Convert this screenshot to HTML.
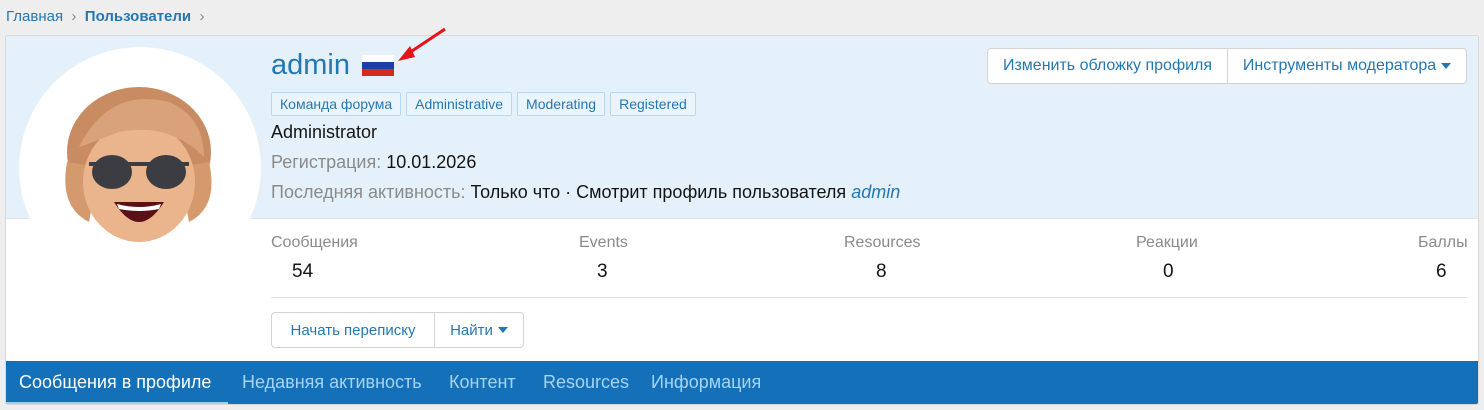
<!DOCTYPE html>
<html><head><meta charset="utf-8"><style>
*{box-sizing:border-box;margin:0;padding:0}
body{width:1484px;height:410px;background:#eeeeee;font-family:"Liberation Sans","DejaVu Sans",sans-serif;position:relative;overflow:hidden}
.a{position:absolute;white-space:nowrap}
.bc{top:8px;left:6px;font-size:15px;color:#2577b1}
.card{left:5px;top:35px;width:1474px;height:370px;background:#fff;border:1px solid #d8d8d8;border-radius:3px;overflow:hidden}
.cover{left:0;top:0;width:1472px;height:183px;background:#e5f1fa;border-bottom:1px solid #dfe6ec}
.tag{display:inline-block;border:1px solid #b8d8f0;background:#eaf4fc;color:#2577b1;font-size:14px;padding:3px 8px;border-radius:2px;margin-right:5px}
.btns{border:1px solid #d3d3d3;border-radius:4px;background:#fff;display:flex;font-size:16px;color:#2577b1}
.btns span{padding:0 13px;display:flex;align-items:center}
.btns span+span{border-left:1px solid #d3d3d3}
.lbl{font-size:16px;color:#8a8a8a}
.val{font-size:19px;color:#141414}
.nav{left:0;top:325px;width:1472px;height:44px;background:#1470b8;font-size:18px;color:#a9d3f3}
.nav span{position:absolute;top:11px}
.tri{display:inline-block;border:5px solid transparent;border-top:6px solid #2577b1;border-bottom:0;margin-left:5px;vertical-align:middle}
</style></head><body>
<div class="a bc">Главная <span style="color:#888">&nbsp;›&nbsp;</span> <b>Пользователи</b> <span style="color:#888">&nbsp;›</span></div>
<div class="a card">
<div class="a cover"></div>
<svg class="a" style="left:13px;top:11px" width="242" height="242" viewBox="0 0 242 242">
<circle cx="121" cy="121" r="121" fill="#fff"/>
<ellipse cx="120" cy="105" rx="72" ry="65" fill="#c98c62"/>
<path d="M48 115 Q40 160 70 175 L80 120Z M190 115 Q200 160 170 175 L160 120Z" fill="#d49a6e"/>
<ellipse cx="120" cy="135" rx="56" ry="60" fill="#eab48c"/>
<path d="M60 100 Q90 40 150 55 Q185 70 185 110 Q150 75 100 85 Q75 95 60 100Z" fill="#d9a27a"/>
<ellipse cx="93" cy="125" rx="20" ry="17" fill="#3b3d42"/>
<ellipse cx="147" cy="125" rx="20" ry="17" fill="#3b3d42"/>
<rect x="70" y="115" width="100" height="4" fill="#3b3d42"/>
<path d="M95 155 Q120 195 145 155Z" fill="#5a1014"/>
<path d="M98 157 Q120 163 142 157 L140 162 Q120 166 100 162Z" fill="#fff"/>
</svg>
<div class="a" style="left:265px;top:13px;font-size:29px;color:#2577b1">admin</div>
<svg class="a" style="left:356px;top:19px" width="32" height="21"><rect width="32" height="7" fill="#fff"/><rect y="7" width="32" height="7" fill="#1c3fa6"/><rect y="14" width="32" height="7" fill="#d52b1e"/></svg>
<div class="a" style="left:265px;top:56px"><span class="tag">Команда форума</span><span class="tag">Administrative</span><span class="tag">Moderating</span><span class="tag">Registered</span></div>
<div class="a" style="left:265px;top:86px;font-size:18px;color:#141414">Administrator</div>
<div class="a" style="left:265px;top:116px;font-size:18px;color:#141414"><span style="color:#8a8a8a">Регистрация:</span> 10.01.2026</div>
<div class="a" style="left:265px;top:146px;font-size:18px;color:#141414"><span style="color:#8a8a8a">Последняя активность:</span> Только что · Смотрит профиль пользователя <i style="color:#2577b1">admin</i></div>
<div class="a btns" style="left:981px;top:12px;height:36px;width:480px"><span style="width:239px;justify-content:center">Изменить обложку профиля</span><span style="flex:1;justify-content:center">Инструменты модератора<i class="tri"></i></span></div>
<div class="a lbl" style="left:265px;top:198px">Сообщения</div><div class="a val" style="left:286px;top:225px">54</div>
<div class="a lbl" style="left:573px;top:198px">Events</div><div class="a val" style="left:591px;top:225px">3</div>
<div class="a lbl" style="left:838px;top:198px">Resources</div><div class="a val" style="left:870px;top:225px">8</div>
<div class="a lbl" style="left:1130px;top:198px">Реакции</div><div class="a val" style="left:1157px;top:225px">0</div>
<div class="a lbl" style="left:1412px;top:198px">Баллы</div><div class="a val" style="left:1430px;top:225px">6</div>
<div class="a" style="left:265px;top:261px;width:1196px;height:1px;background:#e0e0e0"></div>
<div class="a btns" style="left:265px;top:276px;height:36px;width:253px;font-size:15px"><span style="width:162px;justify-content:center">Начать переписку</span><span style="flex:1;justify-content:center">Найти<i class="tri"></i></span></div>
<div class="a nav"><span style="left:13px;color:#fff">Сообщения в профиле</span><span style="left:236px">Недавняя активность</span><span style="left:443px">Контент</span><span style="left:537px">Resources</span><span style="left:645px">Информация</span>
<div class="a" style="left:0;top:41px;width:222px;height:3px;background:#9fd0f5"></div></div>
</div>
<svg class="a" style="left:390px;top:25px" width="60" height="40"><line x1="55" y1="4" x2="16" y2="30" stroke="#e8121a" stroke-width="3"/><path d="M8 36 L20 21 L25 32Z" fill="#e8121a"/></svg>
</body></html>
